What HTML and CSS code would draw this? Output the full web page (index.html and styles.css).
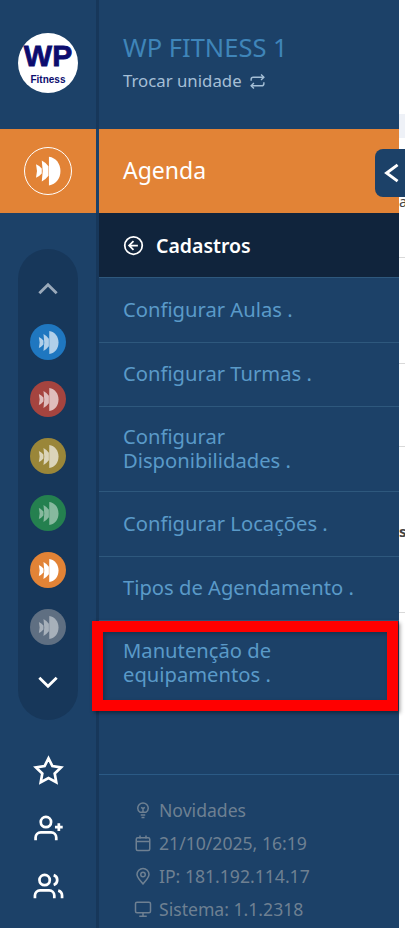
FILE: index.html
```html
<!DOCTYPE html>
<html lang="en">
<head>
    <meta charset="UTF-8">
    <meta name="viewport" content="width=device-width, initial-scale=1.0">
    <title>WP Fitness</title>
    <link rel="stylesheet" href="styles.css">
</head>
<body>
    <svg class="defs" width="0" height="0">
        <symbol id="brand" viewBox="0 0 48 48">
            <path d="M11.5 17 Q15 18.5 17.5 21.5 V26.5 Q15 29.5 11.5 31 L12.5 24 Z"/>
            <path d="M17.5 13 Q21.5 15 24.5 19 V29 Q21.5 33 17.5 35 L18.5 24 Z"/>
            <path d="M25 9 C32.5 10 37 16.5 37 24 C37 31.5 32.5 38 25 39 Z"/>
        </symbol>
    </svg>

    <div class="app">
        <aside class="rail">
            <div class="rail-top">
                <div class="logo">
                    <span class="logo-wp">WP</span>
                    <span class="logo-sub">Fitness</span>
                </div>
            </div>
            <div class="rail-active">
                <span class="active-ring"><svg class="brand-lg"><use href="#brand"/></svg></span>
            </div>
            <div class="pill">
                <svg class="chev dim" viewBox="0 0 24 24"><path d="M4 16 L12 8 L20 16"/></svg>
                <span class="mod mod-blue"><svg class="brand-sm"><use href="#brand"/></svg></span>
                <span class="mod mod-red"><svg class="brand-sm"><use href="#brand"/></svg></span>
                <span class="mod mod-yellow"><svg class="brand-sm"><use href="#brand"/></svg></span>
                <span class="mod mod-green"><svg class="brand-sm"><use href="#brand"/></svg></span>
                <span class="mod mod-orange"><svg class="brand-sm"><use href="#brand"/></svg></span>
                <span class="mod mod-gray"><svg class="brand-sm"><use href="#brand"/></svg></span>
                <svg class="chev down" viewBox="0 0 24 24"><path d="M4 8 L12 16 L20 8"/></svg>
            </div>
            <div class="rail-icons">
                <svg viewBox="0 0 24 24"><path d="M12 2.5 L15 8.6 L21.7 9.6 L16.8 14.3 L18 21 L12 17.8 L6 21 L7.2 14.3 L2.3 9.6 L9 8.6 Z"/></svg>
                <svg viewBox="0 0 24 24"><circle cx="10" cy="7" r="4"/><path d="M2 21 V19 A4 4 0 0 1 6 15 H14 A4 4 0 0 1 18 19 V21"/><path d="M20 8 V14 M17 11 H23"/></svg>
                <svg viewBox="0 0 24 24"><circle cx="9" cy="7" r="4"/><path d="M1.5 21 V19 A4 4 0 0 1 5.5 15 H12.5 A4 4 0 0 1 16.5 19 V21"/><path d="M16 3.2 A4 4 0 0 1 16 10.8"/><path d="M19.5 15.2 A4 4 0 0 1 22.5 19 V21"/></svg>
            </div>
        </aside>

        <nav class="panel">
            <header class="panel-head">
                <div class="unit-name">WP FITNESS 1</div>
                <div class="unit-switch">
                    Trocar unidade
                    <svg viewBox="0 0 24 24"><path d="M17 2 L21 6 L17 10"/><path d="M3 11 V9 A3 3 0 0 1 6 6 H21"/><path d="M7 22 L3 18 L7 14"/><path d="M21 13 V15 A3 3 0 0 1 18 18 H3"/></svg>
                </div>
            </header>
            <div class="panel-module">Agenda</div>
            <div class="panel-back">
                <svg viewBox="0 0 24 24"><circle cx="12" cy="12" r="10"/><path d="M12 7 L7 12 L12 17 M7 12 H17"/></svg>
                Cadastros
            </div>
            <ul class="menu">
                <li>Configurar Aulas .</li>
                <li>Configurar Turmas .</li>
                <li>Configurar Disponibilidades .</li>
                <li>Configurar Locações .</li>
                <li>Tipos de Agendamento .</li>
                <li>Manutenção de equipamentos .</li>
            </ul>
            <footer class="panel-foot">
                <div class="foot-row">
                    <svg viewBox="0 0 24 24"><path d="M8 15 C6 13.5 5 11.5 5 9.5 A7 7 0 0 1 19 9.5 C19 11.5 18 13.5 16 15 Z"/><path d="M9 18.5 H15 M10 22 H14 M12 15 V10 L9.5 8.5 M12 10 L14.5 8.5"/></svg>
                    Novidades
                </div>
                <div class="foot-row">
                    <svg viewBox="0 0 24 24"><rect x="3" y="5" width="18" height="17" rx="2"/><path d="M3 10 H21 M8 2 V6 M16 2 V6"/></svg>
                    21/10/2025, 16:19
                </div>
                <div class="foot-row">
                    <svg viewBox="0 0 24 24"><path d="M12 22.5 C7 17 4 13.5 4 10 A8 8 0 0 1 20 10 C20 13.5 17 17 12 22.5 Z"/><circle cx="12" cy="10" r="3"/></svg>
                    IP: 181.192.114.17
                </div>
                <div class="foot-row">
                    <svg viewBox="0 0 24 24"><rect x="2" y="3" width="20" height="14" rx="2"/><path d="M12 17 V21 M7 21.5 H17"/></svg>
                    Sistema: 1.1.2318
                </div>
            </footer>
        </nav>

        <div class="behind">
            <span class="behind-band"></span>
            <span class="behind-a">a</span>
            <span class="behind-line line-1"></span>
            <span class="behind-line line-2"></span>
            <span class="behind-line line-3"></span>
            <span class="behind-s">s</span>
            <span class="behind-line line-4"></span>
        </div>
    </div>

    <button class="collapse-tab">
        <svg viewBox="0 0 24 24"><path d="M17 3.2 L5 12 L17 20.8"/></svg>
    </button>
    <div class="highlight"></div>
</body>
</html>
```

FILE: styles.css
```css
* {
    box-sizing: border-box;
}

html,
body {
    margin: 0;
    padding: 0;
    height: 928px;
    overflow: hidden;
    background: #fff;
    font-family: 'Noto Sans', 'Open Sans', sans-serif;
}

.defs {
    position: absolute;
}

.app {
    display: flex;
    height: 928px;
}

/* Left icon rail */
.rail {
    width: 99px;
    flex: none;
    background: #1c4168;
    border-right: 3px solid #17375a;
    display: flex;
    flex-direction: column;
    align-items: center;
}

.rail-top {
    height: 129px;
    width: 100%;
    padding-top: 33px;
    display: flex;
    justify-content: center;
}

.logo {
    width: 60px;
    height: 60px;
    border-radius: 50%;
    background: #fff;
    color: #0c0c6e;
    display: flex;
    flex-direction: column;
    align-items: center;
    font-family: 'Liberation Sans', sans-serif;
    font-weight: 700;
}

.logo-wp {
    font-size: 30px;
    line-height: 30px;
    margin-top: 8px;
    -webkit-text-stroke: 0.8px #0c0c6e;
}

.logo-sub {
    font-size: 10px;
    line-height: 11px;
    margin-top: 3px;
}

.rail-active {
    width: 99px;
    margin-right: -3px;
    height: 84px;
    background: #e28336;
    border-right: 3px solid #1c4168;
    display: flex;
    align-items: center;
    justify-content: center;
}

.active-ring {
    width: 48px;
    height: 48px;
    border: 1px solid #fff;
    border-radius: 50%;
    display: flex;
    align-items: center;
    justify-content: center;
}

.brand-lg {
    width: 46px;
    height: 46px;
    flex: none;
    fill: #fff;
}

.brand-sm {
    width: 37px;
    height: 37px;
    flex: none;
    fill: #fff;
    opacity: 0.65;
}

.pill {
    width: 60px;
    height: 471px;
    margin-top: 36px;
    border-radius: 30px;
    background: #17375a;
    display: flex;
    flex-direction: column;
    align-items: center;
    padding-top: 27px;
}

.chev {
    width: 26px;
    height: 26px;
    flex: none;
    fill: none;
    stroke: #fff;
    stroke-width: 2.6;
}

.chev.dim {
    stroke: #9aa9ba;
    margin-bottom: 22px;
}

.chev.down {
    margin-top: 3px;
}

.mod {
    width: 36px;
    height: 36px;
    flex: none;
    margin-bottom: 21px;
    border-radius: 50%;
    display: flex;
    align-items: center;
    justify-content: center;
}

.mod-blue { background: #1f77c0; }
.mod-red { background: #a5443f; }
.mod-yellow { background: #9a8639; }
.mod-green { background: #24804f; }
.mod-orange { background: #e28336; }
.mod-gray { background: #5f6f82; }

.mod-orange .brand-sm {
    opacity: 1;
}

.mod-green .brand-sm,
.mod-gray .brand-sm {
    opacity: 0.45;
}

.rail-icons {
    margin-top: 35px;
    display: flex;
    flex-direction: column;
    align-items: center;
    gap: 27px;
}

.rail-icons svg {
    width: 31px;
    height: 31px;
    fill: none;
    stroke: #fff;
    stroke-width: 2.1;
}

/* Menu panel */
.panel {
    width: 300px;
    flex: none;
    background: #1c4168;
    display: flex;
    flex-direction: column;
}

.panel-head {
    height: 129px;
    padding: 34px 24px 0;
}

.unit-name {
    color: #3f85b9;
    font-size: 25.5px;
    line-height: 27px;
}

.unit-switch {
    margin-top: 9px;
    color: #a5bfd6;
    font-size: 16.8px;
    line-height: 22px;
    display: flex;
    align-items: center;
    gap: 7px;
}

.unit-switch svg {
    width: 17px;
    height: 17px;
    fill: none;
    stroke: #a5bfd6;
    stroke-width: 2;
}

.panel-module {
    height: 84px;
    padding: 0 0 2px 24px;
    background: #e28336;
    color: #fff;
    font-size: 23px;
    display: flex;
    align-items: center;
}

.panel-back {
    height: 64px;
    padding-left: 24px;
    background: #10243c;
    color: #fff;
    font-size: 19.5px;
    font-weight: 600;
    display: flex;
    align-items: center;
    gap: 12px;
}

.panel-back svg {
    width: 21px;
    height: 21px;
    fill: none;
    stroke: #fff;
    stroke-width: 2;
}

.menu {
    list-style: none;
    margin: 0;
    padding: 0;
    height: 498px;
    border-bottom: 1px solid #2b5a85;
}

.menu li {
    min-height: 64.5px;
    padding: 17px 24px 19px;
    border-top: 1px solid #2e587d;
    color: #5a9ac8;
    font-size: 20.2px;
    line-height: 24px;
    display: flex;
    align-items: center;
}

.panel-foot {
    padding: 23px 0 0 35px;
    display: flex;
    flex-direction: column;
    gap: 9px;
}

.foot-row {
    color: #6e8092;
    font-size: 17.6px;
    line-height: 24px;
    display: flex;
    align-items: center;
    gap: 7px;
}

.foot-row svg {
    width: 18px;
    height: 18px;
    flex: none;
    fill: none;
    stroke: #6e8092;
    stroke-width: 2;
}

/* Sliver of the page behind the menu */
.behind {
    flex: 1;
    position: relative;
    overflow: hidden;
}

.behind-band {
    position: absolute;
    left: 0;
    right: 0;
    top: 114px;
    height: 24px;
    background: #eef1f7;
}

.behind-line {
    position: absolute;
    left: 0;
    right: 0;
    height: 1px;
    background: #d9d9d9;
}

.line-1 { top: 257px; }
.line-2 { top: 363px; }
.line-3 { top: 446px; }
.line-4 { top: 612px; }

.behind-a,
.behind-s {
    position: absolute;
    left: 0;
    font-size: 15px;
    line-height: 18px;
    color: #444;
}

.behind-a { top: 192px; }
.behind-s { top: 522px; font-weight: 700; }

.collapse-tab {
    position: absolute;
    left: 375px;
    top: 149px;
    width: 32px;
    height: 48px;
    padding: 0;
    border: none;
    border-radius: 8px 0 0 8px;
    background: #1c4168;
}

.collapse-tab svg {
    display: block;
    width: 22px;
    height: 22px;
    margin-left: 7px;
    fill: none;
    stroke: #fff;
    stroke-width: 3.2;
}

.highlight {
    position: absolute;
    left: 92px;
    top: 621px;
    width: 306px;
    height: 90px;
    border: 11px solid #f00;
    box-shadow: 2px 2px 4px rgba(0, 0, 0, 0.4), inset 2px 2px 4px rgba(0, 0, 0, 0.25);
}
```
